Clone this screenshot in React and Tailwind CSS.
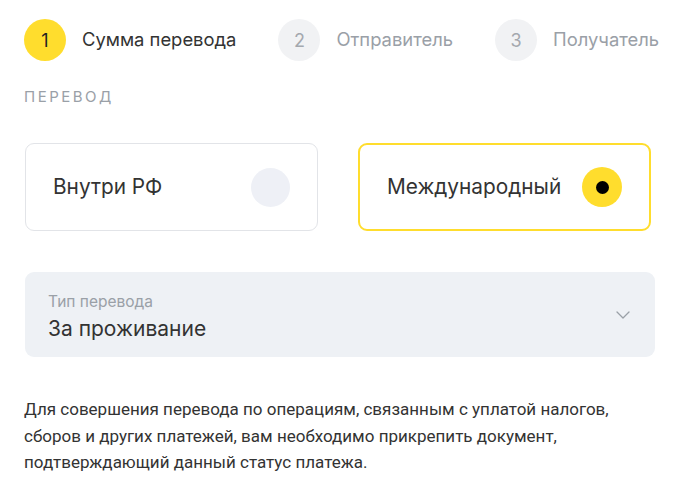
import React, { useState } from 'react'

function Step({ num, label, active }) {
  return (
    <div className="flex items-center gap-4">
      <div
        className={`w-[42px] h-[42px] rounded-full flex items-center justify-center text-[18px] ${
          active ? 'bg-[#ffdd2d] text-[#222222]' : 'bg-[#f1f2f4] text-[#a4a8ae]'
        }`}
      >
        {num}
      </div>
      <span className={`text-[18.4px] ${active ? 'text-[#333333]' : 'text-[#9aa0a7]'}`}>{label}</span>
    </div>
  )
}

function Option({ label, selected, onClick }) {
  return (
    <button
      onClick={onClick}
      className={`w-[293px] h-[88px] rounded-[9px] bg-white flex items-center justify-between px-[27px] text-left ${
        selected ? 'border-2 border-[#ffdd2d]' : 'border border-[#e2e4e8]'
      }`}
    >
      <span className="text-[20.8px] text-[#333333]">{label}</span>
      {selected ? (
        <span className="w-[40px] h-[40px] rounded-full bg-[#ffdd2d] flex items-center justify-center">
          <span className="w-[13px] h-[13px] rounded-full bg-black" />
        </span>
      ) : (
        <span className="w-[39px] h-[39px] rounded-full bg-[#eef0f6]" />
      )}
    </button>
  )
}

export default function App() {
  let [type, setType] = useState('intl')

  return (
    <div className="w-[700px] h-[497px] bg-white overflow-hidden font-['Inter',sans-serif] px-[24px] pt-[19px]">
      {/* Steps */}
      <div className="flex items-center gap-[42px]">
        <Step num="1" label="Сумма перевода" active />
        <Step num="2" label="Отправитель" />
        <Step num="3" label="Получатель" />
      </div>

      <div className="mt-[27px] text-[15px] tracking-[2.5px] text-[#9aa0a7] leading-[18px]">ПЕРЕВОД</div>

      {/* Transfer kind */}
      <div className="mt-[37px] pl-px flex gap-[40px]">
        <Option label="Внутри РФ" selected={type === 'rf'} onClick={() => setType('rf')} />
        <Option label="Международный" selected={type === 'intl'} onClick={() => setType('intl')} />
      </div>

      {/* Select */}
      <div className="mt-[41px] ml-px w-[630px] h-[85px] rounded-[9px] bg-[#eef1f5] flex items-center justify-between pl-[23px] pr-[25px]">
        <div className="flex flex-col pt-[7px]">
          <span className="text-[15.5px] leading-[20px] text-[#9aa0a7]">Тип перевода</span>
          <span className="text-[21px] leading-[33px] text-[#333333]">За проживание</span>
        </div>
        <svg width="14" height="8" viewBox="0 0 14 8" fill="none">
          <path d="M1 1l6 6 6-6" stroke="#9aa0a7" strokeWidth="1.3" strokeLinecap="round" strokeLinejoin="round" />
        </svg>
      </div>

      {/* Note */}
      <p className="mt-[39px] font-['Roboto',sans-serif] text-[17px] leading-[26.5px] text-[#333333]">
        Для совершения перевода по операциям, связанным с уплатой налогов,
        <br />
        сборов и других платежей, вам необходимо прикрепить документ,
        <br />
        подтверждающий данный статус платежа.
      </p>
    </div>
  )
}
